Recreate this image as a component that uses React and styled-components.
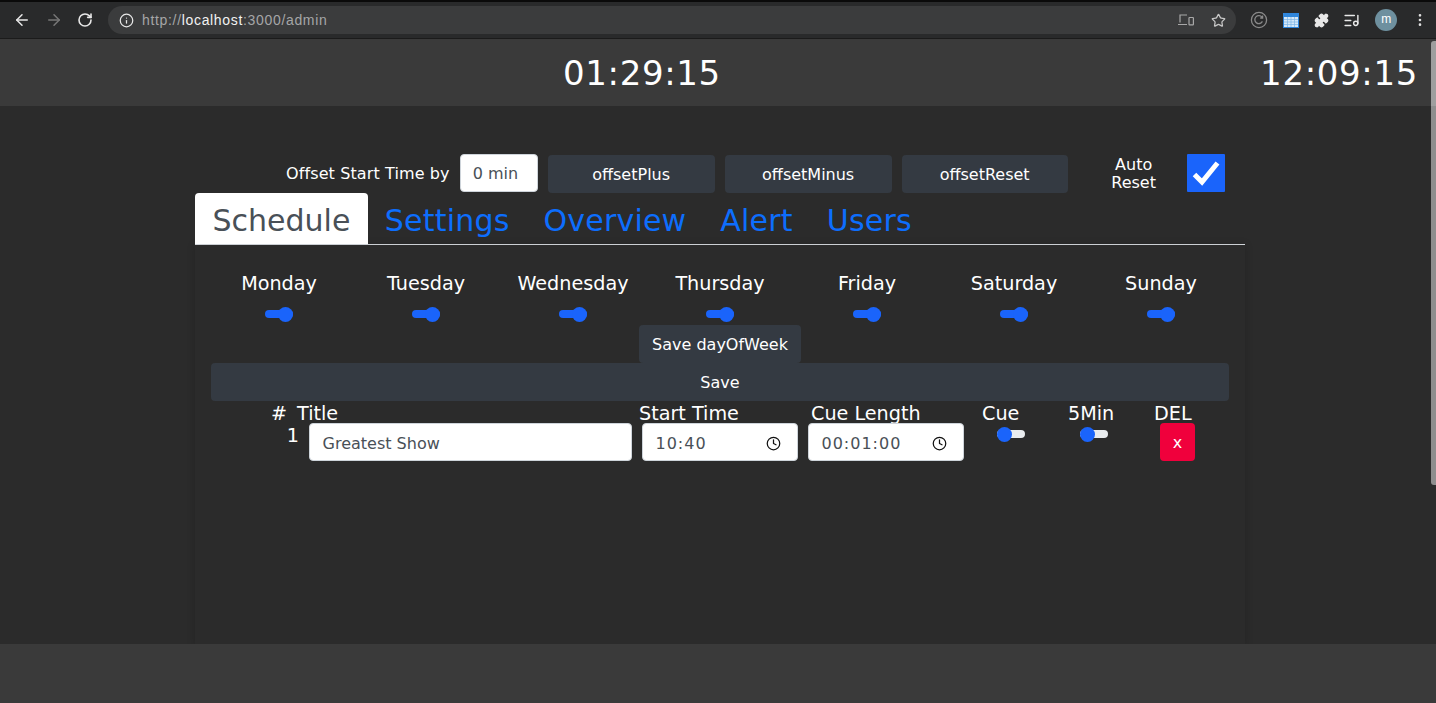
import React from "react";
import styled, { createGlobalStyle } from "styled-components";
import { ArrowLeft, ArrowRight, RotateCw, Info, Star, MoreVertical, Puzzle, ListMusic, Clock } from "lucide-react";

const Global = createGlobalStyle`
  html, body { margin: 0; padding: 0; height: 703px; overflow: hidden; background: #2b2b2b; }
  * { box-sizing: border-box; }
  body { font-family: "DejaVu Sans", Verdana, sans-serif; color: #fff; }
`;

const Page = styled.div`
  display: flex;
  flex-direction: column;
  height: 703px;
  position: relative;
`;

const Chrome = styled.div`
  height: 39px;
  flex: none;
  display: flex;
  align-items: center;
  background: #292a2b;
  border-top: 2px solid #0a0a0a;
  border-bottom: 1px solid #1b1b1b;
  padding: 0 8px 0 13px;
`;

const NavIcons = styled.div`
  display: flex;
  align-items: center;
  gap: 14px;
  width: 95px;
  flex: none;
`;

const UrlPill = styled.div`
  width: 1128px;
  height: 28px;
  border-radius: 14px;
  background: #3b3c3d;
  display: flex;
  align-items: center;
  padding: 0 10px 0 11px;
  flex: none;
`;

const Url = styled.div`
  flex: 1;
  margin-left: 8px;
  font: 14px/1 "Liberation Sans", Arial, sans-serif;
  letter-spacing: 0.67px;
  color: #a5a6a7;
  b { font-weight: 400; color: #f2f2f2; }
`;

const ExtIcons = styled.div`
  flex: 1;
  display: flex;
  align-items: center;
  justify-content: space-between;
  padding-left: 14px;
`;

const Avatar = styled.div`
  width: 22px;
  height: 22px;
  border-radius: 50%;
  background: #6e909f;
  color: #fff;
  font: 12px/21px "Liberation Sans", Arial, sans-serif;
  text-align: center;
`;

const Header = styled.header`
  height: 67px;
  flex: none;
  background: #3a3a3a;
  display: flex;
  align-items: center;
  justify-content: space-between;
  padding: 0 18px 0 563px;
`;

const ClockText = styled.div`
  font-size: 34px;
  line-height: 1;
  letter-spacing: 0.65px;
`;

const Main = styled.main`
  flex: 1;
  background: #2b2b2b;
  padding-top: 48px;
  overflow: hidden;
`;

const Wrap = styled.div`
  width: 1050px;
  margin-left: 195px;
`;

const OffsetRow = styled.div`
  display: flex;
  align-items: flex-start;
  height: 39px;
  padding-left: 91px;
`;

const OffsetLabel = styled.label`
  font-size: 16px;
  letter-spacing: 0.11px;
  line-height: 39px;
  margin-right: 10px;
`;

const OffsetInput = styled.input`
  width: 78px;
  height: 38px;
  border: 1px solid #ced4da;
  border-radius: 4px;
  background: #fff;
  color: #495057;
  font: 16px "DejaVu Sans", Verdana, sans-serif;
  padding: 0 12px;
  outline: none;
`;

const Btn = styled.button`
  display: block;
  height: 38px;
  border: none;
  border-radius: 4px;
  background: #343a42;
  color: #fff;
  font: 16px "DejaVu Sans", Verdana, sans-serif;
  padding: 0 12px;
`;

const OffsetBtn = styled(Btn)`
  width: ${p => p.$w}px;
  margin: 1px 0 0 10px;
`;

const AutoLabel = styled.div`
  width: 60px;
  margin: 2px 0 0 36px;
  font-size: 16px;
  line-height: 18px;
  text-align: center;
`;

const CheckBox = styled.div`
  width: 38px;
  height: 38px;
  margin-left: 23px;
  background: #1a64fb;
  border-radius: 1px;
  display: flex;
  align-items: center;
  justify-content: center;
`;

const Tabs = styled.nav`
  display: flex;
  height: 52px;
  border-bottom: 1px solid #dee2e6;
`;

const Tab = styled.div`
  height: 51px;
  padding: 0 ${p => (p.$active ? 17.5 : 17)}px;
  font-size: 30px;
  letter-spacing: ${p => (p.$active ? 0 : 0.2)}px;
  line-height: 55px;
  border-radius: 4px 4px 0 0;
  background: ${p => (p.$active ? "#fff" : "transparent")};
  color: ${p => (p.$active ? "#495057" : "#0d6efd")};
`;

const Panel = styled.section`
  height: 400px;
  padding: 26px 16px 0;
  box-shadow: 0 0 8px rgba(0, 0, 0, 0.18);
`;

const Days = styled.div`
  display: grid;
  grid-template-columns: repeat(7, 147px);
  margin: 0 -5.5px;
  height: 54px;
`;

const Day = styled.div`
  display: flex;
  flex-direction: column;
  align-items: center;
`;

const DayName = styled.div`
  font-size: 19.2px;
  line-height: 26px;
  margin-bottom: 13px;
`;

const Track = styled.div`
  width: 28px;
  height: 8px;
  border-radius: 4px;
  background: ${p => (p.$on ? "#1a64fb" : "#e9ecef")};
  display: flex;
  align-items: center;
  justify-content: ${p => (p.$on ? "flex-end" : "flex-start")};
`;

const Thumb = styled.span`
  width: 15px;
  height: 15px;
  flex: none;
  border-radius: 50%;
  background: #1a64fb;
`;

const SaveDays = styled(Btn)`
  width: 162px;
  margin: 0 auto;
`;

const SaveAll = styled(Btn)`
  width: 100%;
  height: 38px;
`;

const CueHead = styled.div`
  display: grid;
  grid-template-columns: 86px 342px 172px 171px 86px 86px 1fr;
  height: 22px;
`;

const Head = styled.div`
  font-size: 19.2px;
  line-height: 25px;
  height: 22px;
  text-align: ${p => p.$align || "left"};
  padding-right: ${p => p.$right || 0}px;
`;

const CueRow = styled.div`
  display: grid;
  grid-template-columns: 98px 333px 166px 166px 83px 83px 1fr;
`;

const RowNum = styled.div`
  font-size: 19.2px;
  line-height: 22px;
  text-align: right;
  padding-right: 10px;
  margin-top: 2px;
`;

const Field = styled.div`
  width: ${p => p.$w}px;
  height: 38px;
  background: #fff;
  border: 1px solid #ced4da;
  border-radius: 4px;
  color: #495057;
  font-size: 16px;
  letter-spacing: ${p => p.$space || 0}px;
  display: flex;
  align-items: center;
  justify-content: space-between;
  padding: 2px 16px 0 12.5px;
`;

const ToggleCell = styled.div`
  padding: 7px 0 0 23px;
`;

const DelBtn = styled.button`
  width: 35px;
  height: 38px;
  background: #f0003c;
  border: none;
  border-radius: 4px;
  color: #fff;
  font: 16px "DejaVu Sans", Verdana, sans-serif;
  margin-left: 20px;
  padding: 0;
`;

const Footer = styled.footer`
  height: 59px;
  flex: none;
  background: #3a3a3a;
`;

const Scroll = styled.div`
  position: absolute;
  top: 41px;
  right: 0;
  width: 5px;
  height: 444px;
  background: linear-gradient(#9e9e9e 65px, #8e8e8e 65px);
  border-radius: 3px 0 0 3px;
`;

const days = ["Monday", "Tuesday", "Wednesday", "Thursday", "Friday", "Saturday", "Sunday"];

const DevicesIcon = () => (
  <svg width="16" height="12" viewBox="0 0 16 12" fill="none" stroke="#a8a8a8" strokeWidth="1.2">
    <path d="M9 1H2v7.5M0 10.5h9" />
    <rect x="11" y="3.5" width="4.4" height="7.4" rx="0.6" />
  </svg>
);

const CircleIcon = () => (
  <svg width="18" height="18" viewBox="0 0 18 18" fill="none" stroke="#8a8a8a" strokeWidth="1.3">
    <circle cx="9" cy="9" r="7.6" />
    <path d="M12.4 10.4A4 4 0 1 1 12 6.2M12.6 4.6v2.4h-2.4" />
  </svg>
);

const CalendarIcon = () => (
  <svg width="16" height="15" viewBox="0 0 16 15">
    <rect width="16" height="15" fill="#2f86dc" />
    <rect x="1" y="4" width="14" height="10" fill="#d5e8f8" />
    <path d="M1 6.5h14M1 9h14M1 11.5h14M4.5 4v10M8 4v10M11.5 4v10" stroke="#7db4e6" strokeWidth="0.7" />
  </svg>
);

const App = () => {
  return (
    <Page>
      <Global />
      <Chrome>
        <NavIcons>
          <ArrowLeft size={18} color="#e8e8e8" />
          <ArrowRight size={18} color="#777" />
          <RotateCw size={16} color="#e8e8e8" strokeWidth={2.4} />
        </NavIcons>
        <UrlPill>
          <Info size={15} color="#e8e8e8" />
          <Url>http://<b>localhost</b>:3000/admin</Url>
          <DevicesIcon />
          <Star size={15} color="#c8c8c8" style={{ marginLeft: 17 }} />
        </UrlPill>
        <ExtIcons>
          <CircleIcon />
          <CalendarIcon />
          <Puzzle size={15} color="#e8e8e8" fill="#e8e8e8" />
          <ListMusic size={17} color="#e8e8e8" />
          <Avatar>m</Avatar>
          <MoreVertical size={16} color="#e0e0e0" />
        </ExtIcons>
      </Chrome>
      <Header>
        <ClockText>01:29:15</ClockText>
        <ClockText>12:09:15</ClockText>
      </Header>
      <Main>
        <Wrap>
          <OffsetRow>
            <OffsetLabel>Offset Start Time by</OffsetLabel>
            <OffsetInput defaultValue="0 min" />
            <OffsetBtn $w={167}>offsetPlus</OffsetBtn>
            <OffsetBtn $w={167}>offsetMinus</OffsetBtn>
            <OffsetBtn $w={166}>offsetReset</OffsetBtn>
            <AutoLabel>Auto Reset</AutoLabel>
            <CheckBox>
              <svg width="30" height="28" viewBox="0 0 30 28" fill="none">
                <path d="M3.5 15.5 11 23 26.5 4" stroke="#fff" strokeWidth="5" />
              </svg>
            </CheckBox>
          </OffsetRow>
          <Tabs>
            <Tab $active>Schedule</Tab>
            <Tab>Settings</Tab>
            <Tab>Overview</Tab>
            <Tab>Alert</Tab>
            <Tab>Users</Tab>
          </Tabs>
          <Panel>
            <Days>
              {days.map(d => (
                <Day key={d}>
                  <DayName>{d}</DayName>
                  <Track $on><Thumb /></Track>
                </Day>
              ))}
            </Days>
            <SaveDays>Save dayOfWeek</SaveDays>
            <SaveAll>Save</SaveAll>
            <CueHead>
              <Head $align="right" $right={10}>#</Head>
              <Head>Title</Head>
              <Head>Start Time</Head>
              <Head>Cue Length</Head>
              <Head>Cue</Head>
              <Head>5Min</Head>
              <Head>DEL</Head>
            </CueHead>
            <CueRow>
              <RowNum>1</RowNum>
              <Field $w={323}>Greatest Show</Field>
              <Field $w={156} $space={1}>10:40<Clock size={15} color="#111" /></Field>
              <Field $w={156} $space={1}>00:01:00<Clock size={15} color="#111" /></Field>
              <ToggleCell><Track><Thumb /></Track></ToggleCell>
              <ToggleCell><Track><Thumb /></Track></ToggleCell>
              <DelBtn>x</DelBtn>
            </CueRow>
          </Panel>
        </Wrap>
      </Main>
      <Footer />
      <Scroll />
    </Page>
  );
};

export default App;
